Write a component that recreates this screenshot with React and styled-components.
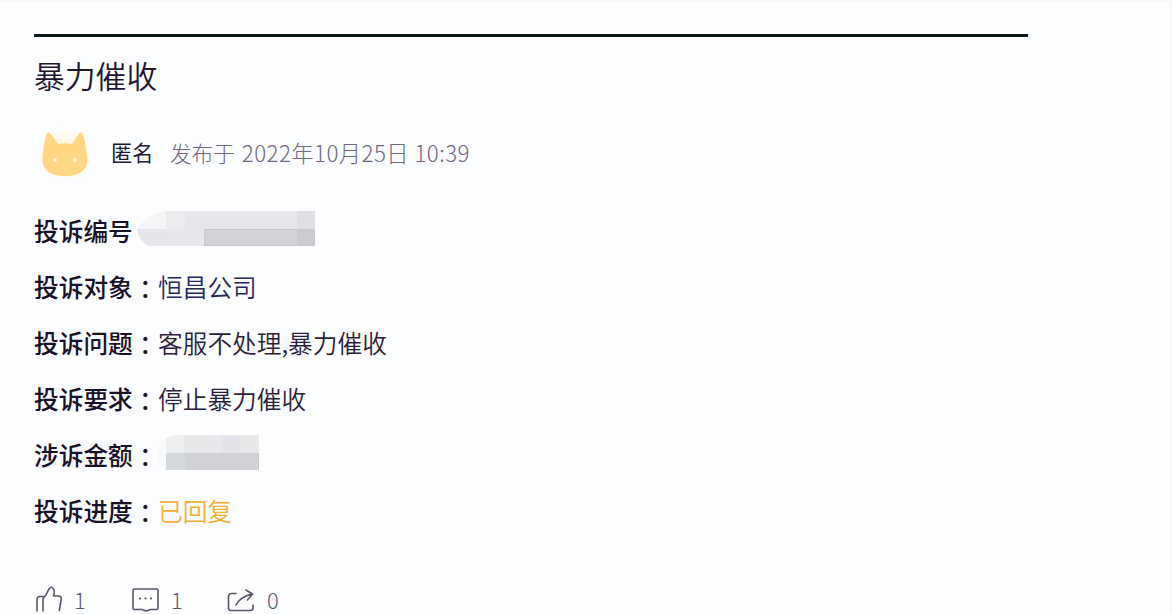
import React from 'react';
import styled, { createGlobalStyle } from 'styled-components';

const GlobalStyle = createGlobalStyle`
  * { box-sizing: border-box; }
  body {
    margin: 0;
    background: #fcfdff;
    font-family: 'Noto Sans CJK SC', sans-serif;
    overflow: hidden;
  }
`;

const Page = styled.main`
  height: 614px;
  padding: 32px 34px 0;
  border: 0 solid #f6f8fa;
  border-width: 2px 2px 0 0;
`;

const Divider = styled.hr`
  width: 994px;
  height: 3px;
  margin: 0;
  border: 0;
  background: #0c171b;
`;

const Title = styled.h1`
  margin: 16px 0 0;
  height: 44px;
  line-height: 44px;
  font-size: 30.8px;
  font-weight: 350;
  color: #21152f;
`;

const Author = styled.div`
  display: flex;
  align-items: center;
  height: 62px;
  margin-top: 24px;
`;

const Avatar = styled.svg`
  width: 62px;
  height: 64px;
  flex: none;
`;

const Name = styled.span`
  margin-left: 15px;
  width: 59px;
  font-size: 21.2px;
  line-height: 32px;
  color: #21172f;
`;

const Meta = styled.span`
  font-size: 21.6px;
  line-height: 32px;
  font-weight: 300;
  color: #6f6580;
  white-space: pre;
`;

const DateText = styled.time`
  margin-left: 7px;
  font-size: 22.3px;
  letter-spacing: 0.45px;
`;

const Details = styled.dl`
  margin: 19px 0 0;
`;

const Row = styled.div`
  display: flex;
  align-items: center;
  height: 56px;
  font-size: 24.7px;
  line-height: 36px;
`;

const Label = styled.dt`
  width: 99px;
  font-weight: 500;
  color: #171027;
  white-space: nowrap;
`;

const Colon = styled.span`
  width: 25px;
  padding-top: 3px;
  font-family: 'Noto Sans CJK TC', sans-serif;
  font-weight: 500;
  color: #171027;
`;

const Value = styled.dd`
  margin: 0;
  font-weight: 350;
  color: ${({ $color }) => $color || '#2a1d3b'};
  white-space: nowrap;
`;

const Mosaic = styled.svg`
  display: block;
  width: ${({ $w }) => $w}px;
  height: 36px;
  margin: ${({ $m }) => $m};
`;

const Actions = styled.footer`
  display: flex;
  margin-top: 46px;
`;

const Action = styled.div`
  display: flex;
  width: 96px;
  height: 30px;
  align-items: center;
  font-size: 22px;
  line-height: 26px;
  font-weight: 300;
  color: #5d546e;

  svg {
    width: 30px;
    height: 28px;
    margin-top: 2px;
    margin-right: ${({ $gap }) => $gap}px;
    fill: none;
    stroke: #5d536e;
    stroke-width: 1.6;
    stroke-linecap: round;
    stroke-linejoin: round;
  }
`;

const CatAvatar = () => (
  <Avatar viewBox="0 0 62 64">
    <defs>
      <radialGradient id="halo">
        <stop offset="0.5" stopColor="#fff6e2" />
        <stop offset="1" stopColor="#fffaf0" stopOpacity="0" />
      </radialGradient>
    </defs>
    <circle cx="31" cy="35" r="29" fill="url(#halo)" />
    <path
      d="M12.500 14c1-2 3-2 4.500 0l7 10q7-1.500 14 0l6.500-10c1.500-2 3.500-2 4.500 0q2 7 3.500 18c4 17-5.500 24-21.500 24S5.500 49 9 32q1.500-11 3.500-18Z"
      fill="#ffd784"
    />
    <circle cx="21" cy="40" r="2" fill="#fff3d5" />
    <circle cx="41" cy="40" r="2" fill="#fff3d5" />
  </Avatar>
);

const NumberMosaic = () => (
  <Mosaic $w={178} $m="-2px 0 0 4px" viewBox="0 0 178 36">
    <path d="M0 18Q14 1 32 0H178V35H12Q3 32 0 18Z" fill="#e6e7ea" />
    <path d="M0 18Q14 1 32 0V18Z" fill="#f4f5f7" />
    <path d="M0 18H29V35H12Q3 32 0 18Z" fill="#e5e6e9" />
    <path d="M29 0H48V18H29Z" fill="#e9ebed" />
    <path d="M160 0H178V18H160Z" fill="#dfe0e3" />
    <path d="M67 18H178V35H67Z" fill="#d2d3d7" />
    <path d="M160 18H178V35H160Z" fill="#cbccd0" />
    <path d="M67.500 34.500V18.500H177.500V34.500Z" fill="none" stroke="#c6c8cc" />
  </Mosaic>
);

const AmountMosaic = () => (
  <Mosaic $w={101} $m="-2px 0 0 0" viewBox="0 0 101 36">
    <path d="M0 30Q-1 4 20 0H101V35H8Z" fill="#e6e8ea" />
    <path d="M0 30Q-1 5 8 3V35Z" fill="#f8f9fb" />
    <path d="M8 3Q14 0 26 0V18H8Z" fill="#eceef0" />
    <path d="M8 18H27V35H8Z" fill="#d5d9de" />
    <path d="M27 18H101V35H27Z" fill="#d0d2d6" />
    <path d="M64 0H82V18H64Z" fill="#e2e4e7" />
    <path d="M100.500 18V35" stroke="#c6c8cc" />
  </Mosaic>
);

const LikeIcon = () => (
  <svg viewBox="0 0 30 28">
    <path d="M3 25V13.500Q3 10.500 6 10.500h3M9 25V12.500Q12.500 9 15 3q2.500-3.500 4.500 0 1.500 2 0 7h5q3 0 2.800 3l-2 11.500" />
  </svg>
);

const CommentIcon = () => (
  <svg viewBox="0 0 30 28">
    <path d="M4.500 3H26.500q1.500 0 1.500 1.500V22q0 1.500-1.500 1.500H20.500l-4.500 1.500-4-1.500H4.500Q3 23.500 3 22V4.500Q3 3 4.500 3Z" />
    <path d="M10 12.500h.1M15.500 12.500h.1M21 12.500h.1" strokeWidth="2.200" />
  </svg>
);

const ShareIcon = () => (
  <svg viewBox="0 0 30 28">
    <path d="M10 7.500H5.500Q2.500 7.500 2.500 10.500V22q0 2.500 2.500 2.500H24.500q2.500 0 2.500-2.500V19M10 19Q14 11 26 8M20 4l6.500 4-5 6" />
  </svg>
);

const fields = [
  { label: '投诉编号', mosaic: <NumberMosaic /> },
  { label: '投诉对象', value: '恒昌公司', color: '#27275f' },
  { label: '投诉问题', value: '客服不处理,暴力催收' },
  { label: '投诉要求', value: '停止暴力催收' },
  { label: '涉诉金额', colon: true, mosaic: <AmountMosaic /> },
  { label: '投诉进度', value: '已回复', color: '#f5ad32' },
];

export default function App() {
  return (
    <>
      <GlobalStyle />
      <Page>
        <Divider />
        <Title>暴力催收</Title>
        <Author>
          <CatAvatar />
          <Name>匿名</Name>
          <Meta>发布于<DateText>2022年10月25日 10:39</DateText></Meta>
        </Author>
        <Details>
          {fields.map(({ label, value, color, colon, mosaic }) => (
            <Row key={label}>
              <Label>{label}</Label>
              {(value || colon) && <Colon>：</Colon>}
              {mosaic || <Value $color={color}>{value}</Value>}
            </Row>
          ))}
        </Details>
        <Actions>
          <Action $gap={10}><LikeIcon />1</Action>
          <Action $gap={11}><CommentIcon />1</Action>
          <Action $gap={11}><ShareIcon />0</Action>
        </Actions>
      </Page>
    </>
  );
}
